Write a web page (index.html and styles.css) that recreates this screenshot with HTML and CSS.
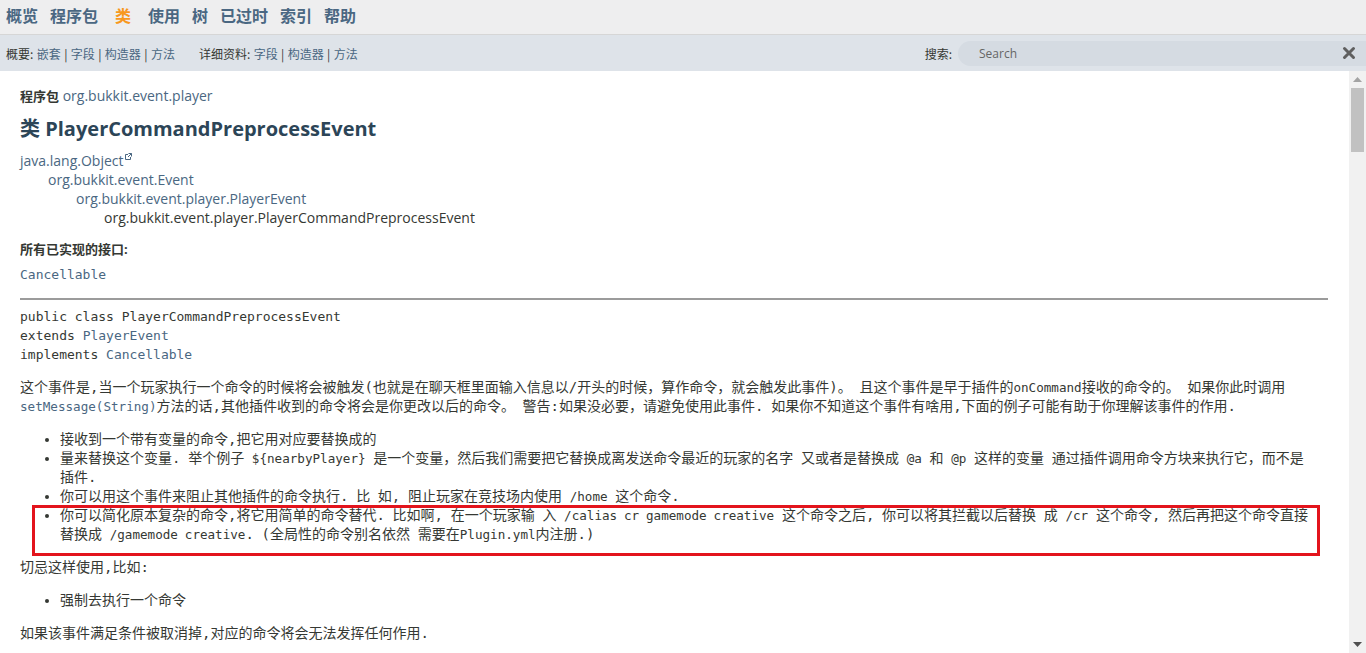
FILE: index.html
```html
<!DOCTYPE html>
<html lang="zh-CN">
<head>
<meta charset="utf-8">
<title>PlayerCommandPreprocessEvent</title>
<link rel="stylesheet" href="styles.css">
</head>
<body>
<div class="app">
  <header class="header">
    <nav class="topnav">
      <ul class="navlist">
        <li><a href="#">概览</a></li>
        <li><a href="#">程序包</a></li>
        <li class="active">类</li>
        <li><a href="#">使用</a></li>
        <li><a href="#">树</a></li>
        <li><a href="#">已过时</a></li>
        <li><a href="#">索引</a></li>
        <li><a href="#">帮助</a></li>
      </ul>
    </nav>
    <div class="subnav">
      <div class="subgroup">概要: <a href="#">嵌套</a> | <a href="#">字段</a> | <a href="#">构造器</a> | <a href="#">方法</a></div>
      <div class="subgroup detail">详细资料: <a href="#">字段</a> | <a href="#">构造器</a> | <a href="#">方法</a></div>
      <div class="search">
        <label class="search-label" for="q">搜索:</label>
        <div class="searchbox">
          <input id="q" class="search-input" type="text" placeholder="Search">
          <span class="reset">
            <svg width="14" height="14" viewBox="0 0 14 14"><path d="M2.5 2.5 L11.5 11.5 M11.5 2.5 L2.5 11.5" stroke="#5f5f5f" stroke-width="3" stroke-linecap="round"/></svg>
          </span>
        </div>
      </div>
    </div>
  </header>
  <div class="viewport">
    <main class="page">
      <div class="pkg"><span class="pkg-label">程序包</span> <a href="#">org.bukkit.event.player</a></div>
      <h1 class="title">类 PlayerCommandPreprocessEvent</h1>
      <div class="tree">
        <div class="tree-row"><a href="#">java.lang.Object</a><svg class="ext" width="7" height="7" viewBox="0 0 7 7"><path d="M0.5 1.5 H3 M0.5 1.5 V6.5 H5.5 V4" stroke="#4a6782" fill="none"/><path d="M3.5 0.5 H6.5 V3.5 M6.5 0.5 L3 4" stroke="#4a6782" fill="none"/></svg></div>
        <div class="tree-row lvl1"><a href="#">org.bukkit.event.Event</a></div>
        <div class="tree-row lvl2"><a href="#">org.bukkit.event.player.PlayerEvent</a></div>
        <div class="tree-row lvl3">org.bukkit.event.player.PlayerCommandPreprocessEvent</div>
      </div>
      <dl class="impl">
        <dt>所有已实现的接口:</dt>
        <dd><code><a href="#">Cancellable</a></code></dd>
      </dl>
      <hr class="rule">
      <div class="sig">
        <div class="sig-line">public class PlayerCommandPreprocessEvent</div>
        <div class="sig-line">extends <a href="#">PlayerEvent</a></div>
        <div class="sig-line">implements <a href="#">Cancellable</a></div>
      </div>
      <div class="block">
        <p>这个事件是,当一个玩家执行一个命令的时候将会被触发(也就是在聊天框里面输入信息以/开头的时候，算作命令，就会触发此事件)。 且这个事件是早于插件的<code>onCommand</code>接收的命令的。 如果你此时调用 <a href="#"><code>setMessage(String)</code></a>方法的话,其他插件收到的命令将会是你更改以后的命令。 警告:如果没必要，请避免使用此事件. 如果你不知道这个事件有啥用,下面的例子可能有助于你理解该事件的作用.</p>
        <ul class="list">
          <li>接收到一个带有变量的命令,把它用对应要替换成的</li>
          <li>量来替换这个变量. 举个例子 <code>${nearbyPlayer}</code> 是一个变量，然后我们需要把它替换成离发送命令最近的玩家的名字 又或者是替换成 <code>@a</code> 和 <code>@p</code> 这样的变量 通过插件调用命令方块来执行它，而不是插件.</li>
          <li>你可以用这个事件来阻止其他插件的命令执行. 比 如, 阻止玩家在竞技场内使用 <code>/home</code> 这个命令.</li>
          <li class="marked">你可以简化原本复杂的命令,将它用简单的命令替代. 比如啊, 在一个玩家输 入 <code>/calias cr gamemode creative</code> 这个命令之后, 你可以将其拦截以后替换 成 <code>/cr</code> 这个命令, 然后再把这个命令直接替换成 <code>/gamemode creative</code>. (全局性的命令别名依然 需要在<code>Plugin.yml</code>内注册.)</li>
        </ul>
        <p>切忌这样使用,比如:</p>
        <ul class="list">
          <li>强制去执行一个命令</li>
        </ul>
        <p>如果该事件满足条件被取消掉,对应的命令将会无法发挥任何作用.</p>
      </div>
    </main>
    <div class="scrollbar">
      <div class="sb-btn"><svg width="9" height="5" viewBox="0 0 9 5"><path d="M0 5 L4.5 0 L9 5Z" fill="#a3a3a3"/></svg></div>
      <div class="sb-track"><div class="sb-thumb"></div></div>
      <div class="sb-btn"><svg width="9" height="5" viewBox="0 0 9 5"><path d="M0 0 L4.5 5 L9 0Z" fill="#505050"/></svg></div>
    </div>
  </div>
</div>
</body>
</html>
```
FILE: styles.css
```css
* { box-sizing: border-box; }
html, body { margin: 0; padding: 0; height: 100%; }
body {
  font-family: "Open Sans", "Noto Sans CJK SC", sans-serif;
  font-size: 14px;
  color: #353833;
  background: #fff;
  overflow: hidden;
}
a { color: #4a6782; text-decoration: none; }

.app { display: flex; flex-direction: column; height: 100vh; }

.header { flex: 0 0 auto; }
.topnav {
  height: 35px;
  background: #eeeeef;
  border-bottom: 1px solid #d6d6d6;
  display: flex;
  align-items: center;
  padding-bottom: 4px;
}
.navlist {
  list-style: none;
  margin: 0;
  padding: 0;
  display: flex;
  font-family: "Noto Sans CJK SC", sans-serif;
  font-size: 16px;
  font-weight: 700;
}
.navlist li { padding: 0 6px; line-height: 28px; color: #4a6782; }
.navlist li a { color: #4a6782; }
.navlist li.active { color: #f8981d; padding: 0 11px; }

.subnav {
  height: 36px;
  background: #dee3e9;
  display: flex;
  align-items: center;
  padding-left: 6px;
  font-family: "Noto Sans CJK SC", sans-serif;
  font-size: 12px;
  color: #353833;
}
.subnav a { color: #4a6782; }
.subgroup { white-space: nowrap; word-spacing: 0.7px; }
.detail { margin-left: 24px; }
.search { margin-left: auto; display: flex; align-items: center; height: 100%; }
.search-label { margin-right: 6px; }
.searchbox {
  width: 408px;
  height: 25px;
  background: #d5dbe2;
  border-radius: 13px 0 0 13px;
  display: flex;
  align-items: center;
  padding-left: 21px;
}
.search-input {
  flex: 1;
  border: 0;
  background: transparent;
  font-family: "Open Sans", sans-serif;
  font-size: 12px;
  color: #353833;
  outline: none;
  padding: 0;
}
.search-input::placeholder { color: #666; }
.reset { width: 26px; display: flex; justify-content: center; align-items: center; margin-right: 4px; }

.viewport { flex: 1; display: flex; min-height: 0; }
.page { flex: 1; overflow: hidden; padding: 15px 21px 0 20px; }

.pkg { line-height: 19px; }
.pkg-label { font-weight: 700; font-size: 13px; }
.title {
  margin: 9px 0 9px;
  font-size: 20px;
  line-height: 27px;
  font-weight: 700;
  color: #2c4557;
}
.tree-row { line-height: 19px; }
.lvl1 { padding-left: 28px; }
.lvl2 { padding-left: 56px; }
.lvl3 { padding-left: 84px; }
.ext { vertical-align: 6px; margin-left: 1px; }

.impl { margin: 13px 0 0; }
.impl dt { font-weight: 700; font-size: 13px; line-height: 19px; }
.impl dd { margin: 5px 0 0; line-height: 19px; }
code { font-family: "DejaVu Sans Mono", "Noto Sans CJK SC", monospace; font-size: 13px; }

.rule { margin: 14px 0 0; border: 0; border-top: 2px solid #9b9b9b; height: 0; }
.sig {
  margin: 7px 0 0;
  font-family: "DejaVu Sans Mono", monospace;
  font-size: 13px;
}
.sig-line { line-height: 19px; white-space: pre; height: 19px; }

.block {
  font-family: "DejaVu Sans Mono", "Noto Sans CJK SC", monospace;
  font-size: 14px;
  line-height: 19px;
  margin-top: 14px;
  word-spacing: -0.73px;
}
.block code { font-size: 12.6px; }
.block p { margin: 14px 0; }
.block p:first-child { margin-top: 0; }
.list { margin: 13px 0 14px; padding: 0 12px 0 40px; }
.list li { line-height: 19px; }
.marked { position: relative; }
.marked::after {
  content: "";
  position: absolute;
  left: -28px;
  right: -4px;
  top: -1px;
  bottom: -12px;
  border: 3px solid #e3141c;
  pointer-events: none;
}

.scrollbar {
  flex: 0 0 17px;
  background: #f1f1f1;
  display: flex;
  flex-direction: column;
}
.sb-btn { height: 17px; display: flex; align-items: center; justify-content: center; }
.sb-track { flex: 1; padding: 0 2px; }
.sb-thumb { height: 64px; background: #c1c1c1; }
```
